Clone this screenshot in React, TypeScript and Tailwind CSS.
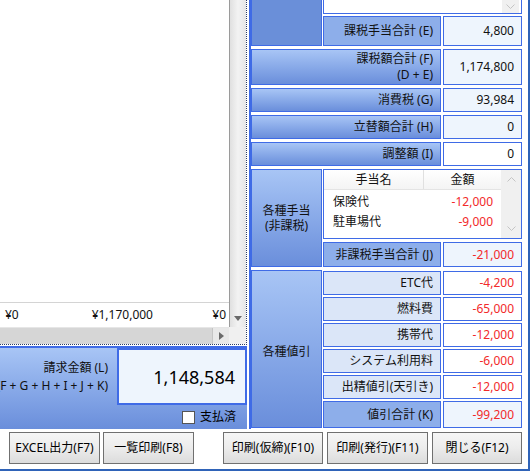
import React from "react";

const B = "border border-[#3f6be6]";
const GRAD = "bg-linear-to-b from-[#a8c5f5] to-[#6a8edb]";
const MID = "bg-[#8daeea]";
const LIGHT = "bg-[#dbe6f8]";
const VAL = "bg-[#eef5fd]";
const RED = "text-[#f22a2a]";

function ChevronDown({ color = "#c4c4c4" }: { color?: string }) {
  return (
    <svg width="9" height="5" viewBox="0 0 9 5">
      <path d="M0.5 0.5 L4.5 4.5 L8.5 0.5" fill="none" stroke={color} strokeWidth="1" />
    </svg>
  );
}
function ChevronUp({ color = "#c4c4c4" }: { color?: string }) {
  return (
    <svg width="9" height="5" viewBox="0 0 9 5">
      <path d="M0.5 4.5 L4.5 0.5 L8.5 4.5" fill="none" stroke={color} strokeWidth="1" />
    </svg>
  );
}

function Row({ label, value, labelBg, valueBg, red, h }: { label: string; value: string; labelBg: string; valueBg: string; red?: boolean; h: string }) {
  return (
    <div className={`flex gap-[2px] ${h}`}>
      <div className={`w-[118px] ${B} ${labelBg} flex items-center justify-end pr-[7px] whitespace-nowrap`}>{label}</div>
      <div className={`flex-1 ${B} ${valueBg} flex items-center justify-end pr-[7px] ${red ? RED : ""}`}>{value}</div>
    </div>
  );
}

function Btn({ label, w, ml }: { label: string; w: string; ml: string }) {
  return (
    <div className={`${w} ${ml} h-[32px] border border-[#707070] bg-linear-to-b from-[#f6f6f6] via-[#ececec] to-[#dcdcdc] flex items-center justify-center text-[12px] text-black whitespace-nowrap`}>
      {label}
    </div>
  );
}

export default function App() {
  return (
    <div className="w-[530px] h-[472px] bg-white overflow-hidden font-['Noto_Sans','Noto_Sans_CJK_JP',sans-serif] text-[12px] leading-[14px] text-[#111]">
      <div className="w-[530px] h-[471px] border-r-2 border-b-2 border-[#2f63b8] flex flex-col">
        {/* main area */}
        <div className="flex h-[429px]">
          {/* left part */}
          <div className="w-[249px] flex flex-col">
            <div className="w-[247px] h-[345px] border-r border-b border-dotted border-[#2c3e66] flex flex-col">
              <div className="flex h-[327px]">
                <div className="w-[229px] flex flex-col bg-white">
                  <div className="flex-1" />
                  <div className="h-[25px] border-t border-[#d4d4d4] flex items-center">
                    <div className="w-[40px] pl-[5px]">¥0</div>
                    <div className="w-[113px] text-right">¥1,170,000</div>
                    <div className="flex-1 text-right pr-[3px]">¥0</div>
                  </div>
                </div>
                <div className="w-[17px] border-l border-[#9a9a9a] bg-linear-to-r from-[#e0e0e0] via-[#f3f3f3] to-[#e6e6e6] flex flex-col justify-end">
                  <div className="h-[18px] flex items-center justify-center">
                    <svg width="8" height="5" viewBox="0 0 8 5">
                      <path d="M0 0 L8 0 L4 5 Z" fill="#6a6a6a" />
                    </svg>
                  </div>
                </div>
              </div>
              <div className="flex h-[17px]">
                <div className="w-[229px] bg-[#d6d6d6] border-t border-[#e6e6e6] flex justify-end">
                  <div className="w-[17px] bg-[#e8e8e8] border-l border-[#c4c4c4] flex items-center justify-center">
                    <svg width="5" height="8" viewBox="0 0 5 8">
                      <path d="M0 0 L5 4 L0 8 Z" fill="#6a6a6a" />
                    </svg>
                  </div>
                </div>
                <div className="w-[17px] bg-[#f0f0f0]" />
              </div>
            </div>
            <div className="h-[1px]" />
            {/* 請求金額 panel */}
            <div className={`w-[247px] h-[83px] border-t-2 border-[#3f6be6] ${GRAD} flex flex-col`}>
              <div className="flex h-[57px]">
                <div className="w-[117px] overflow-hidden flex flex-col justify-center items-end pr-[9px] leading-[18px]">
                  <div className="whitespace-nowrap">請求金額 (L)</div>
                  <div className="flex justify-end w-full">
                    <div className="whitespace-nowrap shrink-0">(F + G + H + I + J + K)</div>
                  </div>
                </div>
                <div className={`w-[130px] border-2 border-[#3f6be6] ${VAL} flex items-center justify-end pr-[10px] text-[18px] leading-[22px] text-black`}>
                  1,148,584
                </div>
              </div>
              <div className="flex-1 flex items-center justify-end pr-[11px] gap-[5px]">
                <div className="w-[13px] h-[13px] bg-white border border-[#555]" />
                <div className="text-black">支払済</div>
              </div>
            </div>
          </div>

          {/* blue vertical line */}
          <div className="w-[2px] bg-[#3f6be6]" />

          {/* right part */}
          <div className="w-[271px] flex flex-col gap-[3px]">
            {/* top group */}
            <div className="flex h-[46px] gap-[1px]">
              <div className={`w-[71px] border border-t-0 border-[#3f6be6] bg-[#6a8fd9]`} />
              <div className="w-[199px] flex flex-col gap-[2px]">
                <div className="h-[14px] border border-t-0 border-[#3f6be6] bg-white flex justify-end pr-[2px]">
                  <div className="w-[17px] h-full bg-[#f0f0f0] flex items-center justify-center">
                    <ChevronDown />
                  </div>
                </div>
                <Row label="課税手当合計 (E)" value="4,800" labelBg={MID} valueBg={VAL} h="flex-1" />
              </div>
            </div>

            {/* F */}
            <div className="flex gap-[2px] h-[36px]">
              <div className={`w-[190px] ${B} ${GRAD} flex flex-col items-end justify-center pr-[7px] leading-[16px]`}>
                <div>課税額合計 (F)</div>
                <div>(D + E)</div>
              </div>
              <div className={`flex-1 ${B} ${VAL} flex items-center justify-end pr-[7px]`}>1,174,800</div>
            </div>

            {[
              ["消費税 (G)", "93,984", VAL],
              ["立替額合計 (H)", "0", VAL],
              ["調整額 (I)", "0", "bg-white"],
            ].map(([l, v, bg]) => (
              <div key={l} className="flex gap-[2px] h-[24px]">
                <div className={`w-[190px] ${B} ${GRAD} flex items-center justify-end pr-[7px]`}>{l}</div>
                <div className={`flex-1 ${B} ${bg} flex items-center justify-end pr-[7px]`}>{v}</div>
              </div>
            ))}

            {/* 各種手当 */}
            <div className="flex h-[98px] gap-[1px]">
              <div className={`w-[71px] ${B} ${GRAD} flex flex-col items-center justify-center gap-[1px] leading-[14px]`}>
                <div>各種手当</div>
                <div>(非課税)</div>
              </div>
              <div className="w-[199px] flex flex-col gap-[3px]">
                <div className={`h-[70px] ${B} bg-white flex`}>
                  <div className="flex-1 flex flex-col">
                    <div className="h-[20px] flex border-b border-[#e4e4e4] bg-linear-to-b from-white to-[#f4f4f4]">
                      <div className="w-[100px] border-r border-[#e0e0e0] flex items-center justify-center">手当名</div>
                      <div className="flex-1 flex items-center justify-center">金額</div>
                    </div>
                    <div className="pt-[2px]">
                      <div className="h-[20px] flex items-center">
                        <div className="w-[100px] pl-[9px]">保険代</div>
                        <div className={`flex-1 text-right pr-[8px] ${RED}`}>-12,000</div>
                      </div>
                      <div className="h-[20px] flex items-center">
                        <div className="w-[100px] pl-[9px]">駐車場代</div>
                        <div className={`flex-1 text-right pr-[8px] ${RED}`}>-9,000</div>
                      </div>
                    </div>
                  </div>
                  <div className="w-[20px] bg-[#f0f0f0] flex flex-col justify-between items-center py-[7px]">
                    <ChevronUp />
                    <ChevronDown />
                  </div>
                </div>
                <Row label="非課税手当合計 (J)" value="-21,000" labelBg={MID} valueBg={VAL} red h="flex-1" />
              </div>
            </div>

            {/* 各種値引 */}
            <div className="flex h-[158px] gap-[1px]">
              <div className={`w-[71px] ${B} ${GRAD} flex items-center justify-center pt-[6px]`}>各種値引</div>
              <div className="w-[199px] flex flex-col gap-[2px] pt-[1px]">
                <Row label="ETC代" value="-4,200" labelBg={LIGHT} valueBg="bg-white" red h="h-[24px]" />
                <Row label="燃料費" value="-65,000" labelBg={LIGHT} valueBg="bg-white" red h="h-[24px]" />
                <Row label="携帯代" value="-12,000" labelBg={LIGHT} valueBg="bg-white" red h="h-[24px]" />
                <Row label="システム利用料" value="-6,000" labelBg={LIGHT} valueBg="bg-white" red h="h-[24px]" />
                <Row label="出精値引(天引き)" value="-12,000" labelBg={LIGHT} valueBg="bg-white" red h="h-[24px]" />
                <Row label="値引合計 (K)" value="-99,200" labelBg={MID} valueBg={VAL} red h="flex-1" />
              </div>
            </div>
          </div>
        </div>

        {/* buttons */}
        <div className="flex mt-[3px]">
          <Btn label="EXCEL出力(F7)" w="w-[91px]" ml="ml-[9px]" />
          <Btn label="一覧印刷(F8)" w="w-[91px]" ml="ml-[3px]" />
          <Btn label="印刷(仮締)(F10)" w="w-[100px]" ml="ml-[29px]" />
          <Btn label="印刷(発行)(F11)" w="w-[101px]" ml="ml-[4px]" />
          <Btn label="閉じる(F12)" w="w-[90px]" ml="ml-[4px]" />
        </div>
      </div>
    </div>
  );
}
